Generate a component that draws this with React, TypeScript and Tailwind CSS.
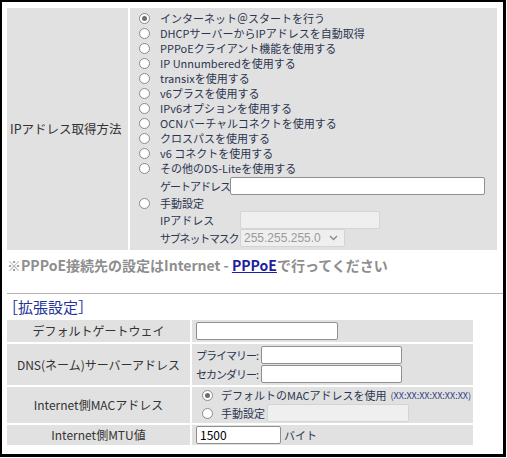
import React from 'react';

const jp = { fontFamily: '"Noto Sans CJK JP", "Liberation Sans", sans-serif' };

const Radio = ({ checked = false }: { checked?: boolean }) => (
    <span className="inline-flex w-[11px] h-[11px] shrink-0 items-center justify-center rounded-full border border-[#8a8a8a] bg-white">
        {checked && <span className="w-[5px] h-[5px] rounded-full bg-[#6e6e6e]" />}
    </span>
);

const options = [
    'インターネット＠スタートを行う',
    'DHCPサーバーからIPアドレスを自動取得',
    'PPPoEクライアント機能を使用する',
    'IP Unnumberedを使用する',
    'transixを使用する',
    'v6プラスを使用する',
    'IPv6オプションを使用する',
    'OCNバーチャルコネクトを使用する',
    'クロスパスを使用する',
    'v6 コネクトを使用する',
    'その他のDS-Liteを使用する',
];

const TextBox = ({ className, value }: { className: string; value?: string }) => (
    <div className={`h-[18px] flex-none rounded-[2px] border border-[#8f8f8f] bg-white px-[3px] text-[12px] leading-[16px] text-black ${className}`}>
        {value}
    </div>
);

const DisabledBox = ({ className }: { className: string }) => (
    <div className={`h-[18px] flex-none rounded-[2px] border border-[#d4d4d4] bg-[#efefef] ${className}`} />
);

const App = () => {
    return (
        <div className="w-[506px] h-[457px] border-l-2 border-t-2 border-r-[3px] border-b-[3px] border-black bg-white overflow-hidden" style={jp}>
            <div className="pl-[5px] pt-[6px] pr-[6px]">
                {/* IP address method */}
                <div className="flex">
                    <div className="flex w-[121px] items-center bg-[#e1e1e1] pl-[3px] text-[12.5px] text-[#333] whitespace-nowrap">
                        IPアドレス取得方法
                    </div>
                    <div className="ml-[2px] flex-1 bg-[#e1e1e1] pl-[9px] pr-[12px] pt-[3px] pb-[3px] text-[11px] text-[#2b3550] whitespace-nowrap">
                        {options.map((o, i) => (
                            <div key={o} className="flex h-[15px] items-center">
                                <Radio checked={i === 0} />
                                <span className="ml-[10px]">{o}</span>
                            </div>
                        ))}
                        <div className="flex h-[20px] items-center pl-[21px]">
                            <span className="w-[70px] flex-none tracking-[-1px]">ゲートアドレス</span>
                            <div className="h-[18px] flex-1 rounded-[2px] border border-[#8f8f8f] bg-white" />
                        </div>
                        <div className="flex h-[15px] items-center">
                            <Radio />
                            <span className="ml-[10px]">手動設定</span>
                        </div>
                        <div className="flex h-[18px] items-center pl-[21px]">
                            <span className="w-[80px] flex-none">IPアドレス</span>
                            <DisabledBox className="w-[140px]" />
                        </div>
                        <div className="flex h-[18px] items-center pl-[21px]">
                            <span className="w-[80px] flex-none tracking-[-1.2px]">サブネットマスク</span>
                            <div className="flex h-[18px] w-[105px] flex-none items-center justify-between rounded-[2px] border border-[#d4d4d4] bg-[#efefef] pl-[3px] pr-[6px] text-[12px] text-[#9a9a9a]" style={{ fontFamily: '"Liberation Sans", sans-serif' }}>
                                <span>255.255.255.0</span>
                                <svg width="9" height="6" viewBox="0 0 9 6" fill="none" stroke="#8a8a8a" strokeWidth="1.4">
                                    <path d="M1 1l3.5 3.5L8 1" />
                                </svg>
                            </div>
                        </div>
                    </div>
                </div>

                <div className="mt-[5px] text-[14px] font-bold text-[#8e8e8e] leading-[20px] whitespace-nowrap">
                    ※PPPoE接続先の設定はInternet - <span className="text-[#1e1e9a] underline">PPPoE</span>で行ってください
                </div>
            </div>

            <div className="mt-[18px] ml-[5px] border-t border-[#b4b4b4]" />

            <div className="pl-[3px]">
                <div className="mt-[3px] ml-[-2px] text-[15px] leading-[20px] text-[#22349a]">［拡張設定］</div>

                <table className="mt-[1px] border-separate border-spacing-[2px] text-[12px] text-[#333] whitespace-nowrap">
                    <tbody>
                        <tr>
                            <td className="h-[22px] w-[183px] bg-[#e1e1e1] text-center">デフォルトゲートウェイ</td>
                            <td className="w-[281px] bg-[#e1e1e1] pl-[4px]">
                                <TextBox className="w-[142px]" />
                            </td>
                        </tr>
                        <tr>
                            <td className="h-[41px] bg-[#e1e1e1] text-center">DNS(ネーム)サーバーアドレス</td>
                            <td className="bg-[#e1e1e1] pl-[4px] text-[11px] text-[#2b3550]">
                                <div className="flex h-[19px] items-center">
                                    <span className="w-[65px] flex-none tracking-[-1px]">プライマリー:</span>
                                    <TextBox className="w-[141px]" />
                                </div>
                                <div className="flex h-[19px] items-center">
                                    <span className="w-[65px] flex-none tracking-[-1px]">セカンダリー:</span>
                                    <TextBox className="w-[141px]" />
                                </div>
                            </td>
                        </tr>
                        <tr>
                            <td className="h-[36px] bg-[#e1e1e1] text-center">Internet側MACアドレス</td>
                            <td className="bg-[#e1e1e1] pl-[10px] text-[11px] text-[#2b3550]">
                                <div className="flex h-[16px] items-center">
                                    <Radio checked />
                                    <span className="ml-[8px]">デフォルトのMACアドレスを使用</span>
                                    <span className="ml-[4px] text-[9px] text-[#2b3a80]">(XX:XX:XX:XX:XX:XX)</span>
                                </div>
                                <div className="flex h-[19px] items-center">
                                    <Radio />
                                    <span className="ml-[8px]">手動設定</span>
                                    <DisabledBox className="ml-[2px] w-[142px]" />
                                </div>
                            </td>
                        </tr>
                        <tr>
                            <td className="h-[20px] bg-[#e1e1e1] text-center">Internet側MTU値</td>
                            <td className="bg-[#e1e1e1] pl-[4px]">
                                <div className="flex items-center">
                                    <TextBox className="w-[85px]" value="1500" />
                                    <span className="ml-[3px] text-[11px] text-[#2b3550]">バイト</span>
                                </div>
                            </td>
                        </tr>
                    </tbody>
                </table>
            </div>
        </div>
    );
};

export default App;
